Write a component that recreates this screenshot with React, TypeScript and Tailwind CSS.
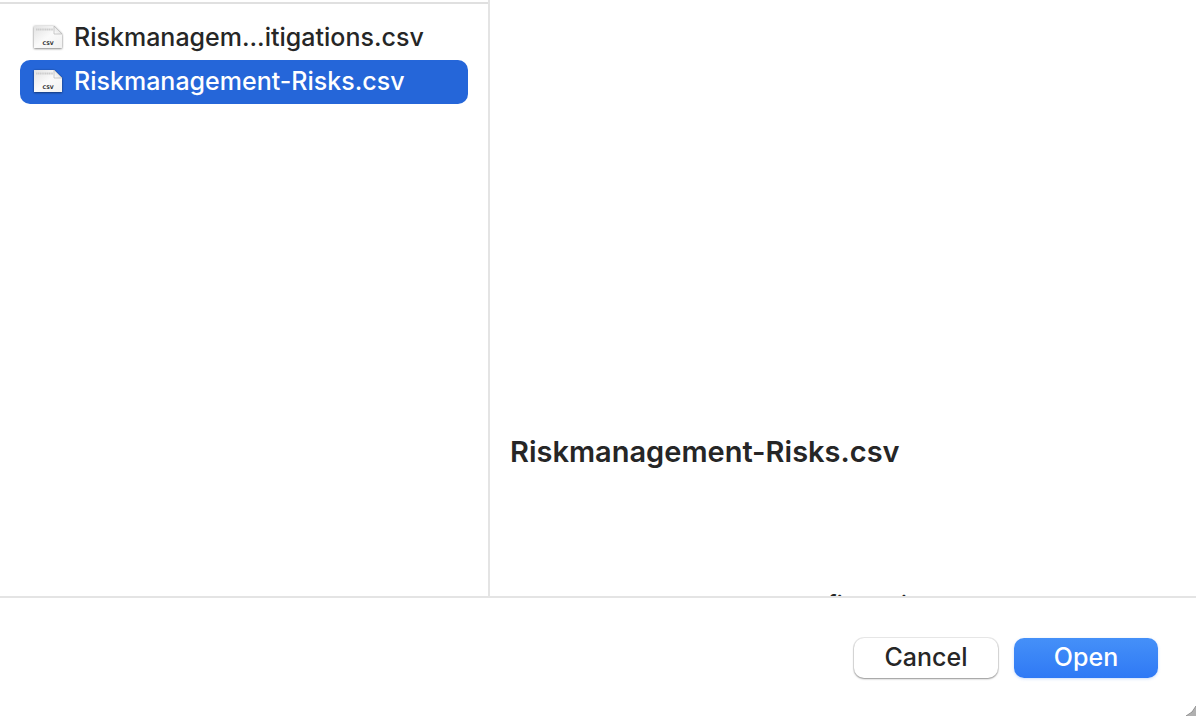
import { useState } from "react";

const files = [
  { name: "Riskmanagement-Mitigations.csv", label: "Riskmanagem...itigations.csv" },
  { name: "Riskmanagement-Risks.csv", label: "Riskmanagement-Risks.csv" },
];

function CsvIcon() {
  return (
    <svg viewBox="0 0 32 30" className="h-[30px] w-8 shrink-0" aria-hidden="true">
      <defs>
        <linearGradient id="sheet" x1="0" y1="0" x2="1" y2="1">
          <stop offset="0" stopColor="#e2e2e2" />
          <stop offset="0.5" stopColor="#fafafa" />
          <stop offset="1" stopColor="#f1f1f1" />
        </linearGradient>
        <linearGradient id="fold" x1="0" y1="1" x2="1" y2="0">
          <stop offset="0" stopColor="#ffffff" />
          <stop offset="1" stopColor="#d0d0d0" />
        </linearGradient>
        <filter id="shade" x="-20%" y="-20%" width="140%" height="150%">
          <feDropShadow dx="0" dy="0.6" stdDeviation="0.9" floodColor="#000" floodOpacity="0.6" />
        </filter>
      </defs>
      <path d="M2 3H22L30 11V25H2Z" fill="url(#sheet)" filter="url(#shade)" />
      <path d="M4 6.5H21" stroke="#cdcdcd" strokeWidth="1.8" strokeDasharray="1.4 0.4" />
      <path d="M22 3V11H30Z" fill="url(#fold)" stroke="#b4b4b4" strokeWidth="0.7" />
      <text x="16" y="22" textAnchor="middle" fontFamily="DejaVu Sans" fontSize="5" fontWeight="700" fill="#2e2e2e">
        CSV
      </text>
    </svg>
  );
}

export default function App() {
  const [selected, setSelected] = useState(1);
  return (
    <main className="flex h-screen flex-col overflow-hidden bg-white font-['Inter',sans-serif] text-[#262626]">
      <div className="flex min-h-0 flex-1">
        <section aria-label="Files" className="w-[490px] shrink-0 border-r-2 border-[#e4e4e4]">
          <div className="h-1 border-b-2 border-[#e0e0e0]" />
          <ul className="px-5 pt-3">
            {files.map((file, i) => (
              <li key={file.name}>
                <button
                  type="button"
                  title={file.name}
                  aria-pressed={selected === i}
                  onClick={() => setSelected(i)}
                  className={
                    "flex h-11 w-full items-center gap-[10px] rounded-[10px] pl-3 text-left text-[25px] leading-8 font-medium whitespace-nowrap " +
                    (selected === i ? "bg-[#2566d9] text-white" : "")
                  }
                >
                  <CsvIcon />
                  <span className="pb-[2px]">{file.label}</span>
                </button>
              </li>
            ))}
          </ul>
        </section>
        <section aria-label="Preview" className="flex min-w-0 flex-1 flex-col overflow-hidden px-5 pt-[432px]">
          <h1 className="text-[29px] leading-10 font-semibold whitespace-nowrap">{files[selected].name}</h1>
          <p className="mt-[118px] shrink-0 pl-[256px] text-[26px] leading-8 whitespace-nowrap">CSV file using commas</p>
        </section>
      </div>
      <footer className="flex h-[120px] shrink-0 items-start justify-end gap-4 border-t-2 border-[#e4e4e4] pt-10 pr-[38px]">
        <button
          type="button"
          className="h-10 w-36 rounded-[10px] bg-white pb-[2px] text-[25px] leading-8 font-medium shadow-[0_0_0_1px_#00000014,0_1px_2px_#00000060]"
        >
          Cancel
        </button>
        <button
          type="button"
          className="h-10 w-36 rounded-[10px] bg-linear-to-b from-[#4590f8] to-[#2f79f5] pb-[2px] text-[25px] leading-8 font-medium text-white shadow-[0_1px_3px_#2f79f540]"
        >
          Open
        </button>
      </footer>
      <svg viewBox="0 0 10 10" className="absolute right-0 bottom-0 size-[10px]" aria-hidden="true">
        <path d="M10 0Q7 7 0 10H10Z" fill="#b0b0b0" />
        <path d="M10 0Q7 7 0 10" fill="none" stroke="#8c8c8c" />
      </svg>
    </main>
  );
}
